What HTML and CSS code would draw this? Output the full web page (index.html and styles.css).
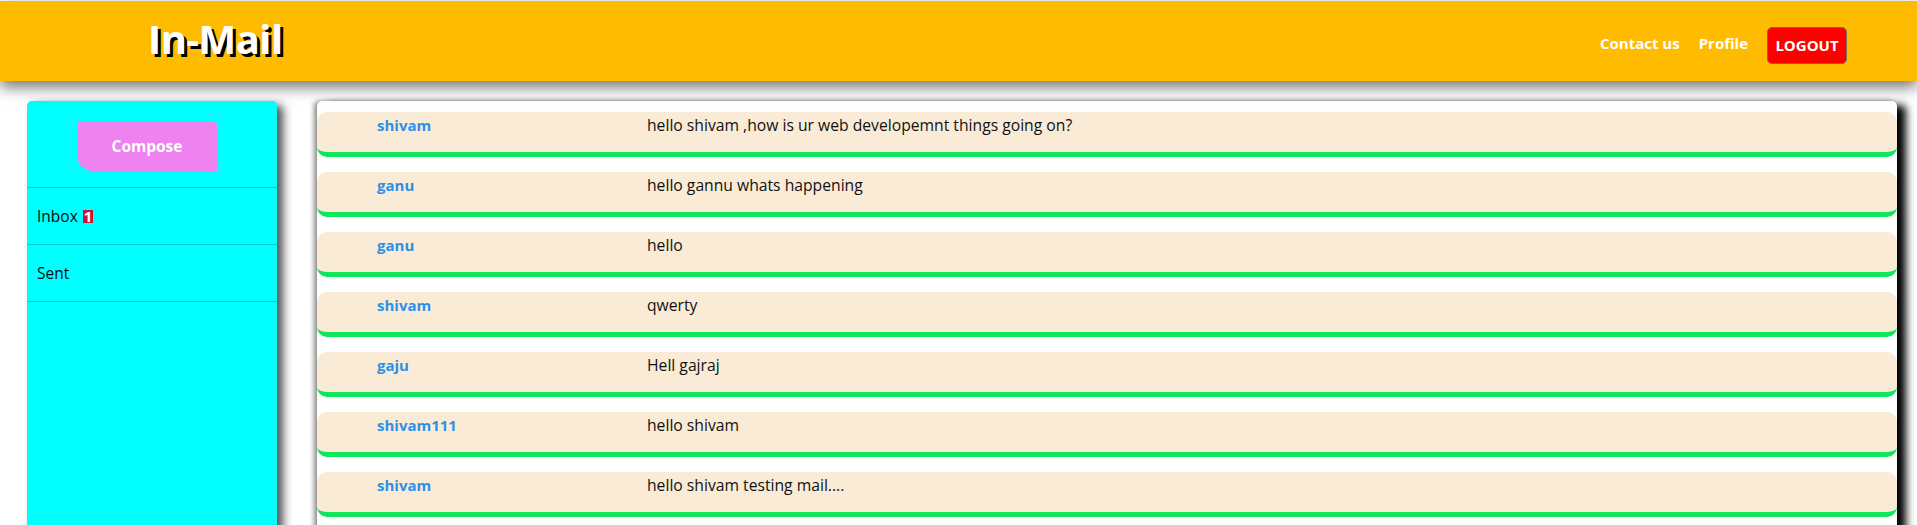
FILE: index.html
```html
<!DOCTYPE html>
<html lang="en">
<head>
<meta charset="utf-8">
<title>In-Mail</title>
<link rel="stylesheet" href="styles.css">
</head>
<body>
<header class="topbar">
  <h1 class="brand">In-Mail</h1>
  <nav class="nav">
    <a class="nav-link" href="#">Contact us</a>
    <a class="nav-link" href="#">Profile</a>
    <button class="logout">LOGOUT</button>
  </nav>
</header>
<div class="layout">
  <aside class="sidebar">
    <div class="compose-wrap">
      <button class="compose">Compose</button>
    </div>
    <div class="side-item">Inbox <span class="badge">1</span></div>
    <div class="side-item">Sent</div>
  </aside>
  <main class="panel">
    <div class="mail"><span class="sender">shivam</span><span class="msg">hello shivam ,how is ur web developemnt things going on?</span></div>
    <div class="mail"><span class="sender">ganu</span><span class="msg">hello gannu whats happening</span></div>
    <div class="mail"><span class="sender">ganu</span><span class="msg">hello</span></div>
    <div class="mail"><span class="sender">shivam</span><span class="msg">qwerty</span></div>
    <div class="mail"><span class="sender">gaju</span><span class="msg">Hell gajraj</span></div>
    <div class="mail"><span class="sender">shivam111</span><span class="msg">hello shivam</span></div>
    <div class="mail"><span class="sender">shivam</span><span class="msg">hello shivam testing mail....</span></div>
  </main>
</div>
</body>
</html>
```

FILE: styles.css
```css
html, body {
  margin: 0;
  padding: 0;
  overflow: hidden;
  background: #ffffff;
  font-family: "Open Sans", "Noto Sans", sans-serif;
}

.topbar {
  margin-top: 1px;
  height: 80px;
  background: #ffbb00;
  display: flex;
  align-items: center;
  justify-content: space-between;
  padding: 0 70px 0 148px;
  box-shadow: 0 6px 14px rgba(0, 0, 0, 0.55);
  position: relative;
  z-index: 2;
}

.brand {
  margin: 0 0 6px 0;
  font-size: 40px;
  font-weight: 700;
  color: #ffffff;
  letter-spacing: -0.6px;
  text-shadow: 3px 3px 0 #000000;
}

.nav {
  display: flex;
  align-items: center;
  gap: 19px;
  margin-top: 8px;
}

.nav-link {
  color: #ffffff;
  font-weight: 700;
  font-size: 15px;
  text-decoration: none;
  margin-top: -5px;
}

.logout {
  background: #ff0000;
  color: #ffffff;
  font-family: inherit;
  font-weight: 700;
  font-size: 15px;
  border: 1px solid #7a6a5a;
  border-radius: 5px;
  width: 80px;
  height: 37px;
  padding: 0;
}

.layout {
  display: flex;
  align-items: flex-start;
  gap: 40px;
  padding: 20px 20px 0 27px;
}

.sidebar {
  width: 250px;
  flex: none;
  height: 460px;
  background: #00ffff;
  border-radius: 5px 5px 0 0;
  box-shadow: 6px 4px 10px rgba(0, 0, 0, 0.7);
}

.compose-wrap {
  padding: 20px 0 16px 50px;
  border-bottom: 1px solid #00c9d2;
}

.compose {
  width: 140px;
  height: 50px;
  background: #ee82ee;
  color: #ffffff;
  font-family: inherit;
  font-weight: 700;
  font-size: 15.5px;
  border: none;
  border-radius: 0 5px 0 16px;
  padding: 0;
  display: block;
}

.side-item {
  height: 56px;
  border-bottom: 1px solid #00c9d2;
  display: flex;
  align-items: center;
  padding-left: 10px;
  font-size: 15.5px;
  color: #0a0a0a;
}

.badge {
  background: #c8143c;
  color: #ffffff;
  font-weight: 700;
  font-size: 15px;
  line-height: 13px;
  padding: 0 1px;
  margin-left: 5px;
}

.panel {
  flex: 1;
  height: 460px;
  background: #ffffff;
  border-radius: 5px 5px 0 0;
  padding-top: 10px;
  box-shadow: 9px 4px 8px #000000, -3px 0 5px rgba(0, 0, 0, 0.45);
}

.mail {
  height: 40px;
  background: #faebd7;
  border-bottom: 5px solid #10e65c;
  border-radius: 10px;
  margin-bottom: 15px;
  display: grid;
  grid-template-columns: 270px 1fr;
  padding-left: 60px;
  line-height: 20px;
  margin-top: 1px;
}

.mail + .mail {
  margin-top: 0;
}

.sender {
  padding-top: 3px;
  font-weight: 700;
  font-size: 15px;
  color: #2d8fe6;
}

.msg {
  padding-top: 3px;
  font-size: 15.7px;
  color: #111111;
}
```
